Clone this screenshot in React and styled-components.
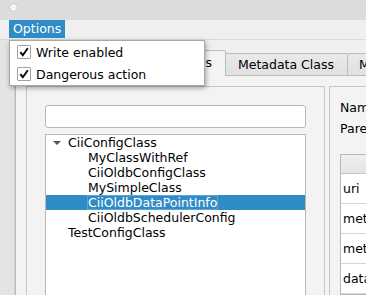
import React from "react";
import styled, { createGlobalStyle } from "styled-components";

const Global = createGlobalStyle`
  html, body { margin: 0; padding: 0; }
  body {
    background: #efefef;
    font-family: "DejaVu Sans", "Liberation Sans", sans-serif;
    font-size: 12.5px;
    color: #000;
    overflow: hidden;
  }
`;

const Window = styled.div`
  position: relative;
  width: 366px;
  height: 295px;
  overflow: hidden;
  background: #efefef;
  display: flex;
  flex-direction: column;
`;

const TitleBar = styled.div`
  height: 20px;
  flex: none;
  background: #dcdcdc;
  display: flex;
  align-items: center;
  padding-left: 9px;
  box-sizing: border-box;
`;

const TitleDot = styled.div`
  width: 7px;
  height: 7px;
  border-radius: 50%;
  background: #f4f4f4;
  border: 1px solid #c8c8c8;
  margin-top: -5px;
`;

const MenuBar = styled.div`
  height: 20px;
  flex: none;
  display: flex;
  align-items: flex-start;
  padding-left: 9px;
  box-sizing: border-box;
  border-bottom: 1px solid #dadada;
`;

const MenuTitle = styled.div`
  height: 18px;
  line-height: 18px;
  padding: 0 4px;
  color: ${(p) => (p.$open ? "#fff" : "#000")};
  background: ${(p) => (p.$open ? "#308cc6" : "transparent")};
`;

const Body = styled.div`
  flex: 1;
  display: flex;
  min-height: 0;
`;

const SideStrip = styled.div`
  width: 15px;
  flex: none;
  background: #e4e4e4;
  border-right: 1px solid #d0d0d0;
  box-sizing: border-box;
`;

const TabWidget = styled.div`
  flex: 1;
  display: flex;
  flex-direction: column;
  padding-top: 11px;
  min-width: 0;
`;

const TabBar = styled.div`
  display: flex;
  align-items: flex-end;
  height: 25px;
  padding-left: 2px;
  position: relative;
  z-index: 1;
  margin-bottom: -1px;
`;

const Tab = styled.div`
  flex: none;
  box-sizing: border-box;
  width: ${(p) => p.$w}px;
  height: ${(p) => (p.$active ? 26 : 23)}px;
  padding: ${(p) => (p.$start ? "0 0 0 11px" : "0 13px 0 0")};
  display: flex;
  align-items: center;
  justify-content: ${(p) => (p.$start ? "flex-start" : "flex-end")};
  white-space: nowrap;
  overflow: hidden;
  border: 1px solid #bcbcbc;
  border-bottom: ${(p) => (p.$active ? "1px solid #f3f3f3" : "1px solid #bcbcbc")};
  border-radius: 2px 2px 0 0;
  margin-left: -1px;
  background: ${(p) =>
    p.$active ? "#f3f3f3" : "linear-gradient(#e9e9e9, #e1e1e1)"};
  padding-bottom: ${(p) => (p.$active ? 2 : 0)}px;
`;

const TabText = styled.span`
  flex: none;
`;

const TabPane = styled.div`
  flex: 1;
  display: flex;
  gap: 4px;
  border: 1px solid #bcbcbc;
  border-right: none;
  border-bottom: none;
  background: #f3f3f3;
  padding: 10px 0 0 10px;
  min-height: 0;
`;

const LeftBox = styled.div`
  width: 299px;
  flex: none;
  box-sizing: border-box;
  border: 1px solid #c6c6c6;
  border-bottom: none;
  padding: 18px 18px 0 18px;
  display: flex;
  flex-direction: column;
  gap: 6px;
`;

const SearchInput = styled.div`
  height: 23px;
  flex: none;
  box-sizing: border-box;
  background: #fff;
  border: 1px solid #b8b8b8;
  border-radius: 3px;
`;

const Tree = styled.div`
  flex: 1;
  background: #fff;
  border: 1px solid #b8b8b8;
  border-bottom: none;
`;

const Row = styled.div`
  height: 15px;
  line-height: 15px;
  padding-left: ${(p) => 22 + p.$level * 20}px;
  position: relative;
  white-space: nowrap;
  color: ${(p) => (p.$selected ? "#fff" : "#000")};
  background: ${(p) => (p.$selected ? "#308cc6" : "transparent")};
`;

const FocusText = styled.span`
  outline: ${(p) => (p.$focus ? "1px solid rgba(255,255,255,0.22)" : "none")};
  outline-offset: -1px;
  padding: 0 1px;
  margin-left: -1px;
`;

const Arrow = styled.span`
  position: absolute;
  left: 7px;
  top: 6px;
  width: 0;
  height: 0;
  border-left: 4px solid transparent;
  border-right: 4px solid transparent;
  border-top: 4px solid #555;
`;

const RightBox = styled.div`
  flex: 1;
  box-sizing: border-box;
  border: 1px solid #c6c6c6;
  border-right: none;
  border-bottom: none;
  padding: 12px 0 0 10px;
  display: flex;
  flex-direction: column;
  min-width: 0;
  overflow: hidden;
`;

const Label = styled.div`
  height: 18px;
  line-height: 18px;
  white-space: nowrap;
  margin-bottom: ${(p) => p.$mb || 0}px;
`;

const Table = styled.div`
  border: 1px solid #b8b8b8;
  border-right: none;
  background: #fff;
  flex: 1;
`;

const HeaderRow = styled.div`
  height: 18px;
  background: linear-gradient(#efefef, #e4e4e4);
  border-bottom: 1px solid #c8c8c8;
`;

const Cell = styled.div`
  height: 29px;
  line-height: 29px;
  padding-left: 2px;
  white-space: nowrap;
  border-bottom: 1px solid #d6d6d6;
`;

const Popup = styled.div`
  position: absolute;
  left: 9px;
  top: 40px;
  width: 196px;
  box-sizing: border-box;
  background: #fff;
  border: 1px solid #a8a8a8;
  box-shadow: 1px 2px 5px rgba(0, 0, 0, 0.35);
  z-index: 10;
`;

const PopupItem = styled.div`
  height: 22px;
  display: flex;
  align-items: center;
  padding-left: 7px;
  gap: 5px;
  white-space: nowrap;
`;

const CheckBox = styled.div`
  width: 14px;
  height: 14px;
  box-sizing: border-box;
  border: 1px solid #a0a0a0;
  border-radius: 1px;
  background: #fff;
  display: flex;
  align-items: center;
  justify-content: center;
`;

const Check = () => (
  <svg width="10" height="10" viewBox="0 0 10 10">
    <path d="M1.3 5.2 L3.8 8.2 L8.8 1.2" fill="none" stroke="#000" strokeWidth="1.9" />
  </svg>
);

const treeItems = [
  { text: "CiiConfigClass", level: 0, expanded: true },
  { text: "MyClassWithRef", level: 1 },
  { text: "CiiOldbConfigClass", level: 1 },
  { text: "MySimpleClass", level: 1 },
  { text: "CiiOldbDataPointInfo", level: 1, selected: true },
  { text: "CiiOldbSchedulerConfig", level: 1 },
  { text: "TestConfigClass", level: 0 },
];

const tabs = [
  { text: "Backends", w: 96 },
  { text: "Config Classes", w: 115, active: true },
  { text: "Metadata Class", w: 123 },
  { text: "Metadata Instances", w: 140, start: true },
];

export default function App() {
  return (
    <>
      <Global />
      <Window>
        <TitleBar>
          <TitleDot />
        </TitleBar>
        <MenuBar>
          <MenuTitle $open>Options</MenuTitle>
        </MenuBar>
        <Body>
          <SideStrip />
          <TabWidget>
            <TabBar>
              {tabs.map((t) => (
                <Tab key={t.text} $w={t.w} $active={t.active} $start={t.start}>
                  <TabText>{t.text}</TabText>
                </Tab>
              ))}
            </TabBar>
            <TabPane>
              <LeftBox>
                <SearchInput />
                <Tree>
                  {treeItems.map((it) => (
                    <Row key={it.text} $level={it.level} $selected={it.selected}>
                      {it.expanded && <Arrow />}
                      <FocusText $focus={it.selected}>{it.text}</FocusText>
                    </Row>
                  ))}
                </Tree>
              </LeftBox>
              <RightBox>
                <Label $mb={3}>Name</Label>
                <Label $mb={16}>Parent</Label>
                <Table>
                  <HeaderRow />
                  <Cell>uri</Cell>
                  <Cell>meta</Cell>
                  <Cell>meta</Cell>
                  <Cell>data</Cell>
                </Table>
              </RightBox>
            </TabPane>
          </TabWidget>
        </Body>
        <Popup>
          <PopupItem>
            <CheckBox><Check /></CheckBox>
            Write enabled
          </PopupItem>
          <PopupItem>
            <CheckBox><Check /></CheckBox>
            Dangerous action
          </PopupItem>
        </Popup>
      </Window>
    </>
  );
}
